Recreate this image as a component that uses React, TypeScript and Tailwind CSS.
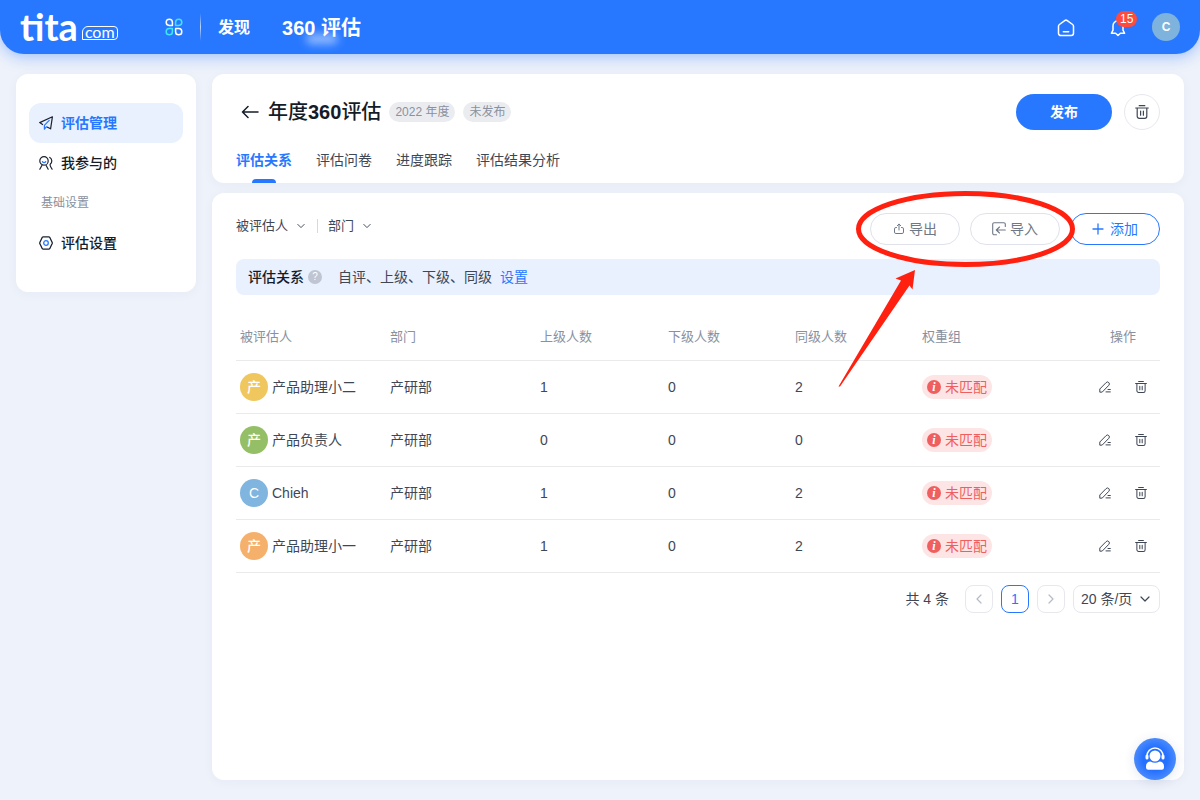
import React from "react";

interface IconProps {
  className?: string;
}

interface Row {
  name: string;
  initial: string;
  color: string;
  dept: string;
  up: number;
  down: number;
  peer: number;
}

const rows: Row[] = [
  { name: "产品助理小二", initial: "产", color: "bg-[#f0c75e]", dept: "产研部", up: 1, down: 0, peer: 2 },
  { name: "产品负责人", initial: "产", color: "bg-[#95bf66]", dept: "产研部", up: 0, down: 0, peer: 0 },
  { name: "Chieh", initial: "C", color: "bg-[#7fb5df]", dept: "产研部", up: 1, down: 0, peer: 2 },
  { name: "产品助理小一", initial: "产", color: "bg-[#f5b16b]", dept: "产研部", up: 1, down: 0, peer: 2 },
];

const tabs = ["评估关系", "评估问卷", "进度跟踪", "评估结果分析"];

function AppsIcon() {
  return (
    <svg width="18" height="18" viewBox="0 0 18 18" fill="none" strokeWidth="1.5" strokeLinejoin="round">
      <path d="M4.3 1.2a3.1 3.1 0 1 0 0 6.200h3.1V4.3A3.1 3.1 0 0 0 4.3 1.200z" stroke="#fff" />
      <path d="M13.700 1.200a3.1 3.1 0 1 1 0 6.200h-3.100V4.300A3.1 3.1 0 0 1 13.700 1.200z" stroke="#3ee6f5" />
      <path d="M4.300 16.800a3.1 3.1 0 1 1 0-6.200h3.100v3.100A3.1 3.1 0 0 1 4.300 16.800z" stroke="#3ee6f5" />
      <path d="M13.700 16.800a3.1 3.1 0 1 0 0-6.200h-3.100v3.100a3.1 3.1 0 0 0 3.100 3.100z" stroke="#fff" />
    </svg>
  );
}

function HomeIcon() {
  return (
    <svg width="18" height="18" viewBox="0 0 18 18" fill="none" stroke="#fff" strokeWidth="1.5" strokeLinecap="round" strokeLinejoin="round">
      <path d="M1.5 7.2c0-.7.3-1.3.9-1.7l5.3-3.9a2.2 2.2 0 0 1 2.6 0l5.3 3.9c.6.4.9 1 .9 1.7v7.1a2.2 2.2 0 0 1-2.2 2.2H3.7a2.2 2.2 0 0 1-2.2-2.2z" />
      <path d="M6.3 12.7h5.4" />
    </svg>
  );
}

function BellIcon() {
  return (
    <svg width="18" height="18" viewBox="0 0 18 18" fill="none" stroke="#fff" strokeWidth="1.5" strokeLinecap="round" strokeLinejoin="round">
      <path d="M9 1.8a5 5 0 0 0-5 5v4.4L2.4 14.3h4.2L9 16.5l2.4-2.2h4.2L14 11.2V6.8a5 5 0 0 0-5-5z" />
    </svg>
  );
}

function PlaneIcon() {
  return (
    <svg width="14" height="14" viewBox="0 0 14 14" fill="none" stroke="#1a2233" strokeWidth="1.2" strokeLinecap="round" strokeLinejoin="round">
      <path d="M3.6 8.5L.7 6.6 13.4.8l-1.800 12L8 11" />
      <path d="M5.4 13.2V9.4l4.800-5M5.4 13.2l1.900-2.400" stroke="#2878ff" />
    </svg>
  );
}

function PeopleIcon() {
  return (
    <svg width="14" height="14" viewBox="0 0 14 14" fill="none" stroke="#1a2233" strokeWidth="1.2" strokeLinecap="round">
      <circle cx="5" cy="4.9" r="4.2" />
      <path d="M3 9.300L.8 13.2M7 9.300l2.200 3.900M10.800 1.400c2.400 1.400 2.600 4.700.6 6.600M11.200 8.300c-.6 1.300.4 2.300 1.900 4.900" />
      <path d="M3.400 5.600c.8 1.400 2.500 1.400 3.300 0" stroke="#2878ff" />
    </svg>
  );
}

function SettingIcon() {
  return (
    <svg width="14" height="14" viewBox="0 0 14 14" fill="none" stroke="#1a2233" strokeWidth="1.3" strokeLinejoin="round">
      <path d="M4.200.8h5.600c.4 0 .7.2.9.5l2.500 5.200c.1.300.1.700 0 1l-2.500 5.200c-.2.300-.5.500-.9.500H4.200c-.4 0-.7-.2-.9-.5L.8 7.500a1.100 1.100 0 0 1 0-1l2.500-5.200c.2-.3.5-.5.9-.5z" />
      <circle cx="7" cy="7" r="2.3" stroke="#2878ff" />
    </svg>
  );
}

function TrashIcon({ className }: IconProps) {
  return (
    <svg className={className} viewBox="0 0 14 14" fill="none" stroke="currentColor" strokeWidth="1.2" strokeLinecap="round">
      <path d="M4.200.7h5.600M.7 3h12.600M2.200 3v8.300a2 2 0 0 0 2 2h5.600a2 2 0 0 0 2-2V3M5.600 6v4.200M8.400 6v4.200" />
    </svg>
  );
}

function EditIcon() {
  return (
    <svg width="12" height="12" viewBox="0 0 12 12" fill="none" stroke="currentColor" strokeLinecap="round" strokeLinejoin="round">
      <path d="M.8 10.800V8L7.100 1.600a1.900 1.900 0 0 1 2.700 0 1.900 1.900 0 0 1 0 2.700L3.500 10.800zM9 8.500h2.300M7 10.900h4.300" />
    </svg>
  );
}

function ExportIcon() {
  return (
    <svg width="12" height="12" viewBox="0 0 12 12" fill="none" stroke="currentColor" strokeLinecap="round" strokeLinejoin="round">
      <path d="M3.500 4.500h-.6A1.400 1.400 0 0 0 1.500 5.900v3.200a1.400 1.400 0 0 0 1.400 1.400h6.200a1.400 1.400 0 0 0 1.400-1.400V5.900a1.400 1.400 0 0 0-1.400-1.400h-.6M6 7V1.200M4.300 2.700L6 1l1.700 1.700" />
    </svg>
  );
}

function ImportIcon() {
  return (
    <svg width="14" height="14" viewBox="0 0 14 14" fill="none" stroke="currentColor" strokeWidth="1.100" strokeLinecap="round" strokeLinejoin="round">
      <path d="M13.300 4.500V2.200A1.500 1.500 0 0 0 11.800.7H2.200A1.500 1.500 0 0 0 .7 2.200v9.100a1.500 1.500 0 0 0 1.500 1.500h2.300M13.300 8H4.500M7.500 5L4.300 8l3.200 3" />
    </svg>
  );
}

function Chevron({ className }: IconProps) {
  return (
    <svg className={className} viewBox="0 0 10 6" fill="none" stroke="currentColor" strokeWidth="1.2" strokeLinecap="round" strokeLinejoin="round">
      <path d="M1 1l4 4 4-4" />
    </svg>
  );
}

function SupportIcon() {
  return (
    <svg width="22" height="24" viewBox="0 0 22 24" fill="none">
      <path d="M3 10V9a8 8 0 0 1 16 0v1" stroke="#fff" strokeWidth="1.5" />
      <rect x="1.500" y="7.500" width="3" height="5" rx="1.500" fill="#fff" />
      <rect x="17.500" y="7.500" width="3" height="5" rx="1.500" fill="#fff" />
      <circle cx="11" cy="9" r="5.5" fill="#fff" />
      <path d="M2 19a4.500 4.500 0 0 1 4.500-4.500c2.800 1.700 6.200 1.700 9 0A4.500 4.500 0 0 1 20 19v1.500a2.200 2.200 0 0 1-2.200 2.200H4.200A2.200 2.200 0 0 1 2 20.500z" fill="#fff" />
    </svg>
  );
}

// red circle and arrow over the import / export buttons
function Highlight() {
  return (
    <svg
      className="pointer-events-none absolute -top-6 right-[84px] z-10 h-[200px] w-[240px]"
      viewBox="836 189 240 200"
      aria-hidden="true"
    >
      <ellipse cx="965.5" cy="229" rx="107" ry="35.5" fill="none" stroke="#ff2010" strokeWidth="5" />
      <path d="M838.5 386.5L901 280.500 895.500 278.500 915 270 912.500 289.500 909.500 285.500 840 386.500z" fill="#ff2010" />
    </svg>
  );
}

function Filter({ label }: { label: string }) {
  return (
    <div className="relative flex items-center text-[13px] text-[#3f4755]">
      <select aria-label={label} className="appearance-none bg-transparent pr-5 leading-6 outline-none">
        <option>{label}</option>
      </select>
      <Chevron className="pointer-events-none absolute right-1 h-1.5 w-2" />
    </div>
  );
}

function Header() {
  return (
    <header className="flex h-[54px] items-center rounded-b-3xl bg-[#2878ff] px-5 text-white shadow-[0_2px_16px_rgba(40,120,255,0.45)]">
      <a href="#" className="flex w-[145px] items-end" aria-label="tita.com">
        <span className="pb-0.5 font-[Lato,sans-serif] text-[38px] leading-8 font-bold">tita</span>
        <span className="mb-1 ml-1 flex h-3.5 items-center rounded-tl-md rounded-tr-sm rounded-br-sm border border-white px-0.5 pb-0.5 font-[Lato,sans-serif] text-base leading-3">
          com
        </span>
      </a>
      <button aria-label="应用">
        <AppsIcon />
      </button>
      <span className="mx-[17px] h-7 w-px bg-gradient-to-b from-transparent via-white/70 to-transparent" />
      <nav className="flex items-center gap-8 pt-px font-bold">
        <a href="#" className="text-base">
          发现
        </a>
        <a href="#" className="relative text-xl">
          360 评估
          <span className="absolute -bottom-0.5 left-6 h-2.5 w-8 rounded-full bg-white/50 blur-xs" />
        </a>
      </nav>
      <div className="ml-auto flex items-center">
        <button aria-label="首页" className="pt-0.5">
          <HomeIcon />
        </button>
        <button aria-label="通知" className="relative ml-[34px] pt-0.5">
          <BellIcon />
          <span className="absolute -top-1.5 left-[7px] h-4 rounded-full bg-[#ff4a3d] px-1 text-xs leading-4">15</span>
        </button>
        <button className="ml-[25px] size-7 rounded-full bg-[#7db3dd] text-xs font-semibold">C</button>
      </div>
    </header>
  );
}

function Sidebar() {
  return (
    <aside className="w-[180px] shrink-0 self-start rounded-xl bg-white px-[13px] py-[29px] shadow-[0_2px_12px_rgba(30,60,120,0.04)]">
      <nav className="flex flex-col text-sm font-bold text-[#141c28]">
        <a href="#" className="flex h-10 items-center gap-2 rounded-xl bg-[#e9f0fe] pl-2.5 text-[#2878ff]">
          <PlaneIcon />
          评估管理
        </a>
        <a href="#" className="flex h-10 items-center gap-2 pl-2.5 font-medium">
          <PeopleIcon />
          我参与的
        </a>
        <span className="flex h-10 items-center pl-3 text-xs font-normal text-[#89919f]">基础设置</span>
        <a href="#" className="flex h-10 items-center gap-2 pl-2.5 font-medium">
          <SettingIcon />
          评估设置
        </a>
      </nav>
    </aside>
  );
}

function TitleCard() {
  return (
    <section className="rounded-xl bg-white px-6 pt-5 shadow-[0_2px_12px_rgba(30,60,120,0.04)]">
      <div className="flex items-center">
        <button aria-label="返回" className="mr-2 ml-1 flex w-5 justify-center">
          <svg width="18" height="14" viewBox="0 0 18 14" fill="none" stroke="#141c28" strokeWidth="1.5" strokeLinecap="round" strokeLinejoin="round">
            <path d="M17 7H1.500M7 1.500L1.500 7 7 12.500" />
          </svg>
        </button>
        <h1 className="text-xl font-medium text-[#141c28]">
          年度<span className="font-semibold">360</span>评估
        </h1>
        <span className="ml-2 rounded-full bg-[#ebecf0] px-1.5 text-xs leading-5 text-[#89919f]">2022 年度</span>
        <span className="ml-2 rounded-full bg-[#ebecf0] px-1.5 text-xs leading-5 text-[#89919f]">未发布</span>
        <button className="ml-auto h-9 w-24 rounded-full bg-[#2878ff] text-sm font-bold text-white">发布</button>
        <button
          aria-label="删除"
          className="ml-3 flex size-9 items-center justify-center rounded-full border border-[#e6e8ee] text-[#3f4755]"
        >
          <TrashIcon className="size-3.5" />
        </button>
      </div>
      <nav className="mt-4 flex gap-6 text-sm leading-7 text-[#3f4755]">
        {tabs.map((tab, i) => (
          <a key={tab} href="#" className={i === 0 ? "relative pb-[9px] font-bold text-[#2878ff]" : "pb-[9px]"}>
            {tab}
            {i === 0 && <span className="absolute bottom-0 left-4 h-1 w-6 rounded-t-sm bg-[#2878ff]" />}
          </a>
        ))}
      </nav>
    </section>
  );
}

function Toolbar() {
  return (
    <div className="flex items-start justify-between">
      <div className="flex items-center pt-px">
        <Filter label="被评估人" />
        <span className="mr-2.5 ml-2 h-3.5 w-px bg-[#d5d9e2]" />
        <Filter label="部门" />
      </div>
      <div className="relative flex gap-2.5 text-sm">
        <button className="flex h-8 w-[90px] items-center justify-center gap-1 rounded-full border border-[#dfe2ea] text-[#6f7886]">
          <ExportIcon />
          导出
        </button>
        <button className="flex h-8 w-[90px] items-center justify-center gap-1 rounded-full border border-[#dfe2ea] text-[#6f7886]">
          <ImportIcon />
          导入
        </button>
        <button className="flex h-8 w-[90px] items-center justify-center gap-1.5 rounded-full border border-[#2878ff] text-[#2878ff]">
          <svg width="12" height="12" viewBox="0 0 12 12" stroke="currentColor" strokeWidth="1.300" strokeLinecap="round">
            <path d="M6 1v10M1 6h10" />
          </svg>
          添加
        </button>
        <Highlight />
      </div>
    </div>
  );
}

function RelationTable() {
  return (
    <table className="mt-5 w-full table-fixed text-left text-sm text-[#3f4755]">
      <thead>
        <tr className="h-[45px] border-b border-[#e9eaec] text-[13px] text-[#89919f]">
          <th className="w-[150px] px-1 font-normal">被评估人</th>
          <th className="w-[150px] px-1 font-normal">部门</th>
          <th className="w-[128px] px-1 font-normal">上级人数</th>
          <th className="w-[127px] px-1 font-normal">下级人数</th>
          <th className="w-[127px] px-1 font-normal">同级人数</th>
          <th className="px-1 font-normal">权重组</th>
          <th className="w-[74px] px-1 text-center font-normal">操作</th>
        </tr>
      </thead>
      <tbody>
        {rows.map((row) => (
          <tr key={row.name} className="h-[53px] border-b border-[#e9eaec]">
            <td className="px-1">
              <div className="flex items-center gap-1">
                <span className={`flex size-7 items-center justify-center rounded-full font-medium text-white ${row.color}`}>
                  {row.initial}
                </span>
                {row.name}
              </div>
            </td>
            <td className="px-1">{row.dept}</td>
            <td className="px-1">{row.up}</td>
            <td className="px-1">{row.down}</td>
            <td className="px-1">{row.peer}</td>
            <td className="px-1">
              <span className="flex h-6 w-[70px] items-center gap-1 rounded-full bg-[#fde5e5] pl-[5px] text-[#f05f5f]">
                <span className="flex size-3.5 items-center justify-center rounded-full bg-[#f05f5f] font-['Liberation_Serif',serif] text-xs font-bold text-white italic">
                  i
                </span>
                未匹配
              </span>
            </td>
            <td className="px-1">
              <div className="flex items-center justify-center gap-6">
                <button aria-label="编辑">
                  <EditIcon />
                </button>
                <button aria-label="删除">
                  <TrashIcon className="size-3" />
                </button>
              </div>
            </td>
          </tr>
        ))}
      </tbody>
    </table>
  );
}

function Pagination() {
  return (
    <div className="mt-3 flex items-center justify-end gap-2 text-sm text-[#3f4755]">
      <span className="mr-2">共 4 条</span>
      <button aria-label="上一页" className="flex size-7 items-center justify-center rounded-lg border border-[#e6e8ee] text-[#b4bac6]">
        <Chevron className="h-1.5 w-2.5 rotate-90" />
      </button>
      <button className="size-7 rounded-lg border border-[#2878ff] text-[#2878ff]">1</button>
      <button aria-label="下一页" className="flex size-7 items-center justify-center rounded-lg border border-[#e6e8ee] text-[#b4bac6]">
        <Chevron className="h-1.5 w-2.5 -rotate-90" />
      </button>
      <div className="relative flex items-center">
        <select
          aria-label="每页条数"
          className="h-7 w-[87px] appearance-none rounded-lg border border-[#e6e8ee] bg-transparent pl-[7px] outline-none"
        >
          <option>20 条/页</option>
        </select>
        <Chevron className="pointer-events-none absolute right-2.5 h-1.5 w-2.5" />
      </div>
    </div>
  );
}

export default function App() {
  return (
    <div className="flex min-h-screen flex-col bg-[#eef2fa] font-['Liberation_Sans','Noto_Sans_CJK_SC',sans-serif]">
      <Header />
      <div className="flex flex-1 gap-4 px-4 py-5">
        <Sidebar />
        <main className="flex min-w-0 flex-1 flex-col gap-2.5">
          <TitleCard />
          <section className="flex-1 rounded-xl bg-white px-6 py-5 shadow-[0_2px_12px_rgba(30,60,120,0.04)]">
            <Toolbar />
            <div className="mt-3.5 flex h-9 items-center rounded-lg bg-[#e9f0fe] px-3 text-sm text-[#3f4755]">
              <span className="font-medium text-[#141c28]">评估关系</span>
              <span className="mr-4 ml-1 flex size-3.5 items-center justify-center rounded-full bg-[#bfc5d2] text-[10px] text-white">
                ?
              </span>
              自评、上级、下级、同级
              <a href="#" className="ml-2 text-[#2878ff]">
                设置
              </a>
            </div>
            <RelationTable />
            <Pagination />
          </section>
        </main>
      </div>
      <button
        aria-label="客服"
        className="fixed right-6 bottom-5 flex size-[42px] items-center justify-center rounded-full bg-radial from-[#2470ff] from-40% to-[#6ba0f8] shadow-[0_2px_12px_rgba(30,60,120,0.12)]"
      >
        <SupportIcon />
      </button>
    </div>
  );
}
